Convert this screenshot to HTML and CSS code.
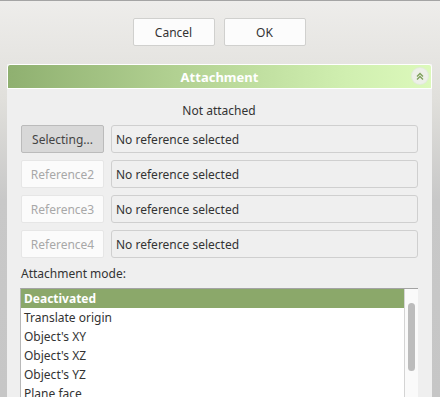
FILE: index.html
```html
<!DOCTYPE html>
<html>
<head>
<meta charset="utf-8">
<link rel="stylesheet" href="styles.css">
</head>
<body>
<div class="toolbar">
  <button class="btn">Cancel</button>
  <button class="btn">OK</button>
</div>
<div class="panel">
  <div class="panel-header">
    <span class="panel-title">Attachment</span>
    <span class="collapse">
      <svg width="14" height="14" viewBox="0 0 14 14">
        <path d="M4 7.5 L7 4.5 L10 7.5 M4 10.5 L7 7.5 L10 10.5" fill="none" stroke="#7ea05c" stroke-width="1.4"/>
      </svg>
    </span>
  </div>
  <div class="panel-body">
    <div class="status">Not attached</div>
    <div class="ref-row">
      <button class="ref-btn active">Selecting...</button>
      <div class="ref-field">No reference selected</div>
    </div>
    <div class="ref-row">
      <button class="ref-btn">Reference2</button>
      <div class="ref-field">No reference selected</div>
    </div>
    <div class="ref-row">
      <button class="ref-btn">Reference3</button>
      <div class="ref-field">No reference selected</div>
    </div>
    <div class="ref-row">
      <button class="ref-btn">Reference4</button>
      <div class="ref-field">No reference selected</div>
    </div>
    <div class="mode-label">Attachment mode:</div>
    <div class="list">
      <ul class="items">
        <li class="selected">Deactivated</li>
        <li>Translate origin</li>
        <li>Object's XY</li>
        <li>Object's XZ</li>
        <li>Object's YZ</li>
        <li>Plane face</li>
      </ul>
      <div class="scrollbar"><div class="thumb"></div></div>
    </div>
  </div>
</div>
</body>
</html>
```

FILE: styles.css
```css
html, body {
  margin: 0;
  padding: 0;
}
body {
  width: 440px;
  height: 397px;
  overflow: hidden;
  font-family: "Noto Sans", "Open Sans", sans-serif;
  font-size: 12px;
  color: #333;
  border-top: 1px solid #a4a4a4;
  box-sizing: border-box;
  background: linear-gradient(to bottom, #eeedeb 0px, #e0dfdb 100px, #c8c8c8 200px, #c6c6c6 397px);
}
.toolbar {
  display: flex;
  justify-content: center;
  gap: 9px;
  padding-top: 17px;
  padding-right: 2px;
}
.btn {
  width: 82px;
  height: 28px;
  background: #fcfcfc;
  border: 1px solid #d0d0ce;
  border-radius: 2px;
  font-family: inherit;
  font-size: 12px;
  color: #333;
  padding: 0;
}
.panel {
  margin: 18px 8px 0 7px;
  background: #efefef;
  height: 340px;
}
.panel-header {
  position: relative;
  height: 23px;
  border: 1px solid #fff;
  border-bottom: 1px solid #fff;
  border-radius: 3px 3px 0 0;
  background: linear-gradient(to right, #8fb070 0%, #b2d192 40%, #d0efb0 80%, #dcf9bb 100%);
  display: flex;
  align-items: center;
  justify-content: center;
}
.panel-title {
  font-weight: bold;
  font-size: 13px;
  color: #fff;
}
.collapse {
  position: absolute;
  right: 3px;
  top: 3px;
  width: 16px;
  height: 16px;
  border-radius: 50%;
  background: #edf0e8;
  box-shadow: 0 0 0 1px #e2eadb;
  display: flex;
  align-items: center;
  justify-content: center;
}
.collapse svg {
  display: block;
}
.panel-body {
  padding: 13px 14px 0 13px;
}
.status {
  text-align: center;
  height: 18px;
  line-height: 18px;
  margin-bottom: 5px;
}
.ref-row {
  display: flex;
  gap: 7px;
  margin-bottom: 7px;
  margin-left: 1px;
}
.ref-btn {
  width: 83px;
  height: 28px;
  flex: none;
  background: #fbfbfb;
  border: 1px solid #e6e6e6;
  border-radius: 2px;
  color: #a8a8a8;
  font-family: inherit;
  font-size: 12px;
  padding: 0;
}
.ref-btn.active {
  background: #d8d8d8;
  border-color: #bbbbbb;
  color: #444;
}
.ref-field {
  flex: 1;
  height: 28px;
  box-sizing: border-box;
  border: 1px solid #cfcfcf;
  border-radius: 3px;
  background: #efefef;
  padding-left: 4px;
  line-height: 27px;
  color: #333;
}
.mode-label {
  margin-top: 1px;
  margin-left: 1px;
  height: 18px;
  line-height: 18px;
  margin-bottom: 5px;
}
.list {
  display: flex;
  background: #fff;
  border-top: 1px solid #a3a3a3;
  border-left: 1px solid #b8b8b8;
  height: 120px;
}
.items {
  list-style: none;
  margin: 0;
  padding: 0;
  flex: 1;
}
.items li {
  height: 19px;
  line-height: 19px;
  padding-left: 3px;
  color: #333;
}
.items li.selected {
  background: #8ba86a;
  color: #fff;
  font-weight: bold;
}
.scrollbar {
  width: 13px;
  flex: none;
  background: #fafafa;
  border-left: 1px solid #d4d4d4;
  position: relative;
}
.thumb {
  position: absolute;
  left: 3px;
  top: 14px;
  width: 7px;
  height: 68px;
  border-radius: 4px;
  background: #bcbcbc;
}
```
